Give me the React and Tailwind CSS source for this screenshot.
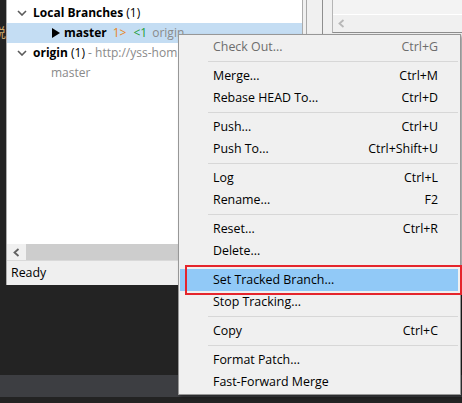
import React from 'react';

// Branch tree + context menu mock
const font = { fontFamily: '"Open Sans", "Noto Sans", "Noto Sans CJK SC", sans-serif' };

function ChevronDown() {
  return (
    <svg width="10" height="6" viewBox="0 0 10 6" className="shrink-0">
      <polyline points="1,1 5,5 9,1" fill="none" stroke="#5a5a5a" strokeWidth="1.6" />
    </svg>
  );
}

function Triangle() {
  return (
    <svg width="8" height="10" viewBox="0 0 8 10" className="shrink-0">
      <polygon points="0,0 8,5 0,10" fill="#000" />
    </svg>
  );
}

function ArrowLeft({ color = '#606060' }) {
  return (
    <svg width="7" height="9" viewBox="0 0 7 9">
      <polyline points="5.5,1 1.5,4.5 5.5,8" fill="none" stroke={color} strokeWidth="1.8" />
    </svg>
  );
}

const menu = [
  { label: 'Check Out...', key: 'Ctrl+G', disabled: true },
  'sep',
  { label: 'Merge...', key: 'Ctrl+M' },
  { label: 'Rebase HEAD To...', key: 'Ctrl+D' },
  'sep',
  { label: 'Push...', key: 'Ctrl+U' },
  { label: 'Push To...', key: 'Ctrl+Shift+U' },
  'sep',
  { label: 'Log', key: 'Ctrl+L' },
  { label: 'Rename...', key: 'F2' },
  'sep',
  { label: 'Reset...', key: 'Ctrl+R' },
  { label: 'Delete...' },
  'sep',
  { label: 'Set Tracked Branch...', active: true },
  { label: 'Stop Tracking...' },
  'sep',
  { label: 'Copy', key: 'Ctrl+C' },
  'sep',
  { label: 'Format Patch...' },
  { label: 'Fast-Forward Merge' },
];

function ContextMenu() {
  return (
    <div className="absolute left-[178px] top-[34px] w-[283px] bg-[#f0f0f0] border border-[#979797] py-[1px] shadow-[2px_2px_3px_rgba(0,0,0,0.35)]">
      {menu.map((item, i) =>
        item === 'sep' ? (
          <div key={i} className="h-[7px] flex items-center ml-[29px] mr-[2px]">
            <div className="h-px w-full bg-[#d7d7d7]" />
          </div>
        ) : (
          <div
            key={i}
            className={`h-[22px] flex items-center justify-between pl-[33px] pr-[20px] pt-px ml-[1px] mr-[2px] text-[12.4px] ${
              item.active ? 'bg-[#91c9f7]' : ''
            } ${item.disabled ? 'text-[#6d6d6d]' : 'text-black'}`}
          >
            <span>{item.label}</span>
            {item.key && <span>{item.key}</span>}
          </div>
        )
      )}
    </div>
  );
}

function BranchTree() {
  return (
    <div className="w-[297px] flex flex-col bg-white border-l border-r border-[#acacac]">
      <div className="flex-1 pt-[3px] text-[12px]">
        <div className="h-[20px] flex items-center pl-[10px] gap-[6px]">
          <ChevronDown />
          <span className="text-black">
            <span className="font-bold">Local Branches</span> (1)
          </span>
        </div>
        <div className="h-[20px] flex items-center pl-[45px] bg-[#c4ddf3]">
          <Triangle />
          <span className="ml-[4px] font-bold text-black">master</span>
          <span className="ml-[6px] text-[#e8861e]">1&gt;</span>
          <span className="ml-[7px] text-[#1e9e3a]">&lt;1</span>
          <span className="ml-[5px] text-[#8a8a8a]">origin</span>
        </div>
        <div className="h-[20px] flex items-center pl-[10px] gap-[6px]">
          <ChevronDown />
          <span className="text-black whitespace-nowrap">
            <span className="font-bold">origin</span> (1) <span className="text-[#8a8a8a]">- http://yss-hom</span>
          </span>
        </div>
        <div className="h-[20px] flex items-center pl-[44px] text-[#8a8a8a]">master</div>
      </div>
      <div className="h-[17px] flex bg-[#f0f0f0] border-b border-[#d9d9d9]">
        <div className="w-[19px] flex items-center justify-center">
          <ArrowLeft />
        </div>
        <div className="w-[230px] bg-[#cdcdcd]" />
      </div>
    </div>
  );
}

function RightPane() {
  return (
    <div className="flex-1 flex bg-[#f0f0f0]">
      <div className="w-[4px] border-r border-[#a8a8a8]" />
      <div className="w-[16px] border-r border-[#8e8e8e]" />
      <div className="w-[9px]" />
      <div className="flex-1 flex flex-col">
        <div className="h-[33px] flex flex-col border-l border-[#b5b5b5] border-b border-b-[#8e8e8e]">
          <div className="h-[15px] bg-[#f3f3f3] border-b border-white" />
          <div className="flex-1 flex items-center pl-[5px] bg-[#f0f0f0]">
            <ArrowLeft color="#b8b8b8" />
          </div>
        </div>
      </div>
    </div>
  );
}

export default function App() {
  return (
    <div className="relative w-[462px] h-[403px] bg-[#232323] overflow-hidden" style={font}>
      <div className="flex h-[285px]">
        <div className="w-[6px] overflow-hidden flex justify-end pt-[26px]">
          <span className="text-[13px] leading-none text-[#c9a66b] whitespace-nowrap">说</span>
        </div>
        <div className="flex-1 flex flex-col bg-[#f0f0f0]">
          <div className="flex h-[261px]">
            <BranchTree />
            <RightPane />
          </div>
          <div className="flex-1 flex items-center pl-[4px] bg-[#efefef] border-l border-[#acacac] text-[12.4px] text-black">
            Ready
          </div>
        </div>
      </div>
      <div className="h-[90px]" />
      <div className="h-[22px] bg-[#3d3e42]" />

      <ContextMenu />
      <div className="absolute left-[185px] top-[265px] w-[277px] h-[30px] border-2 border-[#e5252c]" />
    </div>
  );
}
